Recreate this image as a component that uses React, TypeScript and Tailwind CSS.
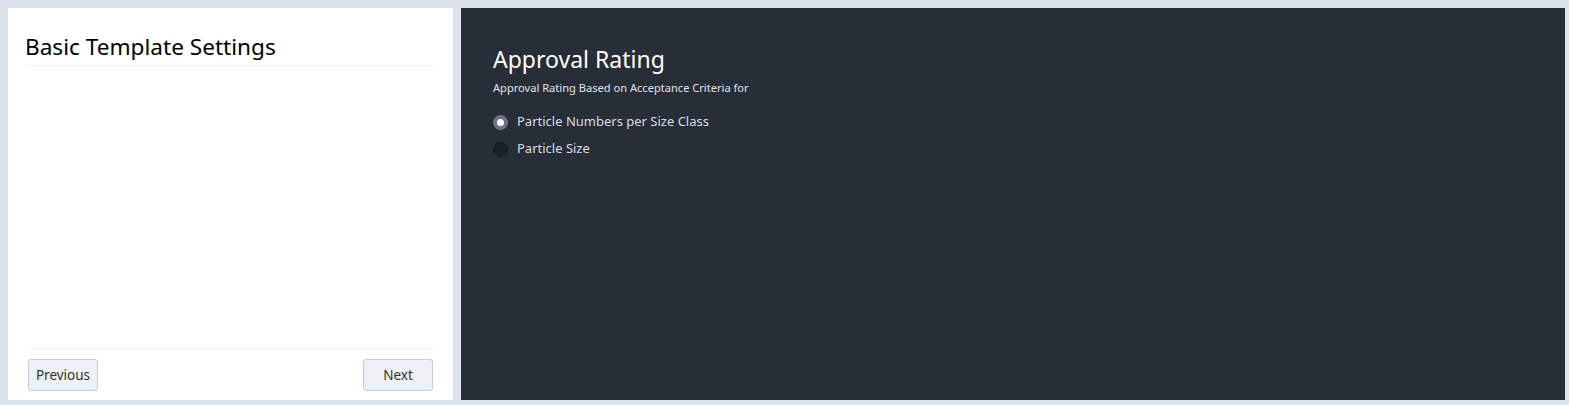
const font = { fontFamily: '"Noto Sans", "Open Sans", sans-serif' };

const Radio = ({ checked, label }: { checked: boolean; label: string }) => (
  <label className="flex items-center gap-[9px] h-[27px] cursor-pointer">
    {checked ? (
      <span className="w-[15px] h-[15px] rounded-full bg-white border-[4px] border-[#6b7480] shrink-0" />
    ) : (
      <span className="w-[15px] h-[15px] rounded-full bg-[#1b2128] border border-[#13171d] shrink-0" />
    )}
    <span className="text-[13px] text-[#d8dde3]">{label}</span>
  </label>
);

export default function App() {
  return (
    <div className="w-[1569px] h-[405px] bg-[#dce3ec] pt-[8px] pl-[8px] pr-[4px] flex gap-[8px]" style={font}>
      <div className="w-[445px] h-[392px] bg-white flex flex-col px-[20px]">
        <h2 className="text-[22.6px] leading-none text-black pt-[28px] pb-[6px] ml-[-3px] border-b border-[#f0f1f3]">
          Basic Template Settings
        </h2>
        <div className="flex-1" />
        <div className="border-t border-[#f0f1f3] flex justify-between pt-[10px] pb-[9px]">
          <button className="w-[70px] h-[32px] bg-[#edf1f5] border border-[#c5cdd8] rounded-[3px] text-[13.5px] text-[#333]">
            Previous
          </button>
          <button className="w-[70px] h-[32px] bg-[#edf1f5] border border-[#c5cdd8] rounded-[3px] text-[13.5px] text-[#333]">
            Next
          </button>
        </div>
      </div>
      <div className="flex-1 h-[392px] bg-[#272e37] pl-[32px] pt-[36px]">
        <h1 className="text-[23px] leading-[30px] text-white">Approval Rating</h1>
        <p className="text-[11.1px] text-[#e1e5ea] mt-[6px] mb-[12px]">Approval Rating Based on Acceptance Criteria for</p>
        <Radio checked label="Particle Numbers per Size Class" />
        <Radio checked={false} label="Particle Size" />
      </div>
    </div>
  );
}
